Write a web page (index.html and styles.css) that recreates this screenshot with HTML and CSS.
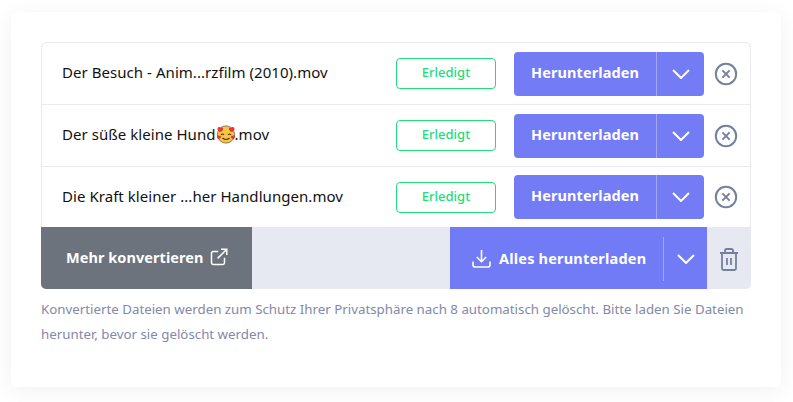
FILE: index.html
```html
<!DOCTYPE html>
<html lang="de">

<head>
    <meta charset="UTF-8">
    <meta name="viewport" content="width=device-width, initial-scale=1.0">
    <title>Konvertierte Dateien</title>
    <link rel="stylesheet" href="styles.css">
</head>

<body>
    <div class="card">
        <div class="file-list">
            <!-- File rows -->
            <div class="file-row">
                <div class="file-name">Der Besuch - Anim...rzfilm (2010).mov</div>
                <div class="status">Erledigt</div>
                <div class="download">
                    <span class="download-label">Herunterladen</span>
                    <span class="download-arrow">
                        <svg width="18" height="10" viewBox="0 0 18 10"><path d="M1 1l8 8 8-8"/></svg>
                    </span>
                </div>
                <svg class="remove" width="24" height="24" viewBox="0 0 24 24"><circle cx="12" cy="12" r="10.2"/><path d="M8.4 8.4l7.2 7.2M15.6 8.4l-7.2 7.2"/></svg>
            </div>

            <div class="file-row">
                <div class="file-name">Der süße kleine Hund<svg class="emoji" width="20" height="20" viewBox="0 0 20 20">
                        <circle cx="10" cy="10.5" r="8.6" fill="#f8c545" stroke="#5b4a2a" stroke-width=".7"/>
                        <path d="M5 11q1.5-2 3 0M12 11q1.5-2 3 0M6.5 14q3.5 3 7 0" fill="none" stroke="#4a3418" stroke-width="1.1"/>
                        <path d="M1.5 4.5c1-2 3-1.5 3.3-.6.8-.9 2.6-.3 2.2 1.5-.3 1.2-2 2.3-3 2.6-1-.4-3-2-2.5-3.5zM13 5.400c-.4-1.800 1.400-2.400 2.200-1.500.3-.9 2.300-1.400 3.300.6.500 1.500-1.500 3.100-2.500 3.500-1-.3-2.700-1.400-3-2.600zM1 12c.8-1 2-.7 2.300 0 .6-.5 1.900 0 1.600 1.200-.3 1-1.500 1.700-2.300 1.900C1.800 14.800.5 13.200 1 12zM15 13.200c-.3-1.200 1-1.700 1.600-1.200.3-.7 1.500-1 2.300 0 .5 1.200-.8 2.800-1.600 3.100-.8-.2-2-.9-2.300-1.900z" fill="#e5392f"/>
                    </svg>.mov</div>
                <div class="status">Erledigt</div>
                <div class="download">
                    <span class="download-label">Herunterladen</span>
                    <span class="download-arrow">
                        <svg width="18" height="10" viewBox="0 0 18 10"><path d="M1 1l8 8 8-8"/></svg>
                    </span>
                </div>
                <svg class="remove" width="24" height="24" viewBox="0 0 24 24"><circle cx="12" cy="12" r="10.2"/><path d="M8.4 8.4l7.2 7.2M15.6 8.4l-7.2 7.2"/></svg>
            </div>

            <div class="file-row">
                <div class="file-name">Die Kraft kleiner ...her Handlungen.mov</div>
                <div class="status">Erledigt</div>
                <div class="download">
                    <span class="download-label">Herunterladen</span>
                    <span class="download-arrow">
                        <svg width="18" height="10" viewBox="0 0 18 10"><path d="M1 1l8 8 8-8"/></svg>
                    </span>
                </div>
                <svg class="remove" width="24" height="24" viewBox="0 0 24 24"><circle cx="12" cy="12" r="10.2"/><path d="M8.4 8.4l7.2 7.2M15.6 8.4l-7.2 7.2"/></svg>
            </div>

            <!-- Bottom bar -->
            <div class="action-bar">
                <div class="more-button">
                    <span>Mehr konvertieren</span>
                    <svg width="18" height="18" viewBox="0 0 18 18"><path d="M14.500 9.800v5a1.700 1.700 0 0 1-1.700 1.700H3.200a1.700 1.700 0 0 1-1.700-1.700V5.200a1.700 1.700 0 0 1 1.700-1.700h5M11 1.200h5.800V7M16.800 1.200L7.600 10.400"/></svg>
                </div>
                <div class="all-button">
                    <div class="all-label">
                        <svg width="19" height="19" viewBox="0 0 19 19"><path d="M9.500 1v11.500M4.800 8l4.700 4.700L14.200 8M1 12.500v3.200A2.300 2.300 0 0 0 3.300 18h12.400a2.300 2.300 0 0 0 2.300-2.300v-3.200"/></svg>
                        <span>Alles herunterladen</span>
                    </div>
                    <span class="all-arrow">
                        <svg width="18" height="10" viewBox="0 0 18 10"><path d="M1 1l8 8 8-8"/></svg>
                    </span>
                </div>
                <div class="trash-button">
                    <svg width="20" height="23" viewBox="0 0 20 23"><path d="M1 5h18M6 5V2.500A1.500 1.500 0 0 1 7.500 1h5A1.500 1.500 0 0 1 14 2.500V5M3 5v15.500A1.500 1.500 0 0 0 4.500 22h11a1.500 1.500 0 0 0 1.500-1.500V5M8 10v7M12 10v7"/></svg>
                </div>
            </div>
        </div>

        <p class="note">Konvertierte Dateien werden zum Schutz Ihrer Privatsphäre nach 8 automatisch gelöscht. Bitte laden Sie Dateien herunter, bevor sie gelöscht werden.</p>
    </div>
</body>

</html>
```

FILE: styles.css
```css
html,
body {
    height: 402px;
    overflow: hidden;
}

body {
    font-family: "Noto Sans", Arial, sans-serif;
    margin: 0;
    padding: 12px 12px 0 11px;
    background-color: #fff;
    color: #111;
    box-sizing: border-box;
}

.card {
    height: 375px;
    padding: 30px;
    background-color: white;
    border-radius: 6px;
    box-shadow: 0 4px 24px rgba(0, 0, 0, 0.06);
    box-sizing: border-box;
}

.file-list {
    border: 1px solid #e9eaf3;
    border-radius: 5px;
}

.file-row {
    display: flex;
    align-items: center;
    height: 61px;
    padding: 0 12px 0 20px;
    border-bottom: 1px solid #e9eaf3;
}

.file-row:nth-child(3) {
    height: 60px;
    border-bottom: none;
}

.file-name {
    display: flex;
    align-items: center;
    flex: 1;
    padding-bottom: 3px;
    font-size: 15px;
    letter-spacing: 0.05px;
    white-space: nowrap;
}

.emoji {
    margin: 0 -1px 0 0;
}

.status {
    width: 100px;
    height: 31px;
    margin-right: 18px;
    line-height: 27px;
    text-align: center;
    font-size: 13px;
    font-weight: 500;
    color: #22dd7c;
    border: 1px solid #22dd7c;
    border-radius: 4px;
    box-sizing: border-box;
}

.download {
    display: flex;
    width: 190px;
    height: 44px;
    color: white;
    background-color: #737cf5;
    border-radius: 4px;
}

.download-label {
    width: 143px;
    line-height: 40px;
    text-align: center;
    font-size: 14.500px;
    font-weight: 700;
    letter-spacing: 0.08px;
    border-right: 1px solid #a3a9f0;
    box-sizing: border-box;
}

.download-arrow,
.all-arrow {
    display: flex;
    flex: 1;
    align-items: center;
    justify-content: center;
}

.download-arrow svg,
.all-arrow svg {
    fill: none;
    stroke: white;
    stroke-width: 2;
}

.all-arrow svg {
    margin-top: 2px;
}

.remove {
    margin-left: 10px;
    fill: none;
    stroke: #75809c;
    stroke-width: 2;
}

.action-bar {
    display: flex;
    height: 62px;
    margin: 0 -1px -1px;
    background-color: #e7e9f2;
    border-radius: 0 0 5px 5px;
    overflow: hidden;
}

.more-button {
    display: flex;
    align-items: center;
    gap: 7px;
    width: 211px;
    padding: 0 0 2px 25px;
    color: white;
    background-color: #6c737c;
    font-size: 14.500px;
    font-weight: 700;
    letter-spacing: 0.06px;
    box-sizing: border-box;
}

.more-button svg {
    fill: none;
    stroke: white;
    stroke-width: 1.500;
}

.all-button {
    display: flex;
    align-items: center;
    width: 257px;
    margin-left: auto;
    color: white;
    background-color: #717bf6;
}

.all-label {
    display: flex;
    align-items: center;
    gap: 8px;
    width: 214px;
    height: 44px;
    padding: 0 0 2px 22px;
    margin-top: 2px;
    font-size: 14.500px;
    font-weight: 700;
    letter-spacing: 0.2px;
    border-right: 1px solid #a3a9f0;
    box-sizing: border-box;
}

.all-label svg {
    fill: none;
    stroke: white;
    stroke-width: 1.600;
}

.trash-button {
    display: flex;
    align-items: center;
    justify-content: center;
    width: 44px;
}

.trash-button svg {
    margin-top: 2px;
    fill: none;
    stroke: #75809c;
    stroke-width: 1.800;
}

.note {
    margin: 8px 0 0;
    font-size: 13.300px;
    line-height: 25px;
    color: #8189a8;
}
```
